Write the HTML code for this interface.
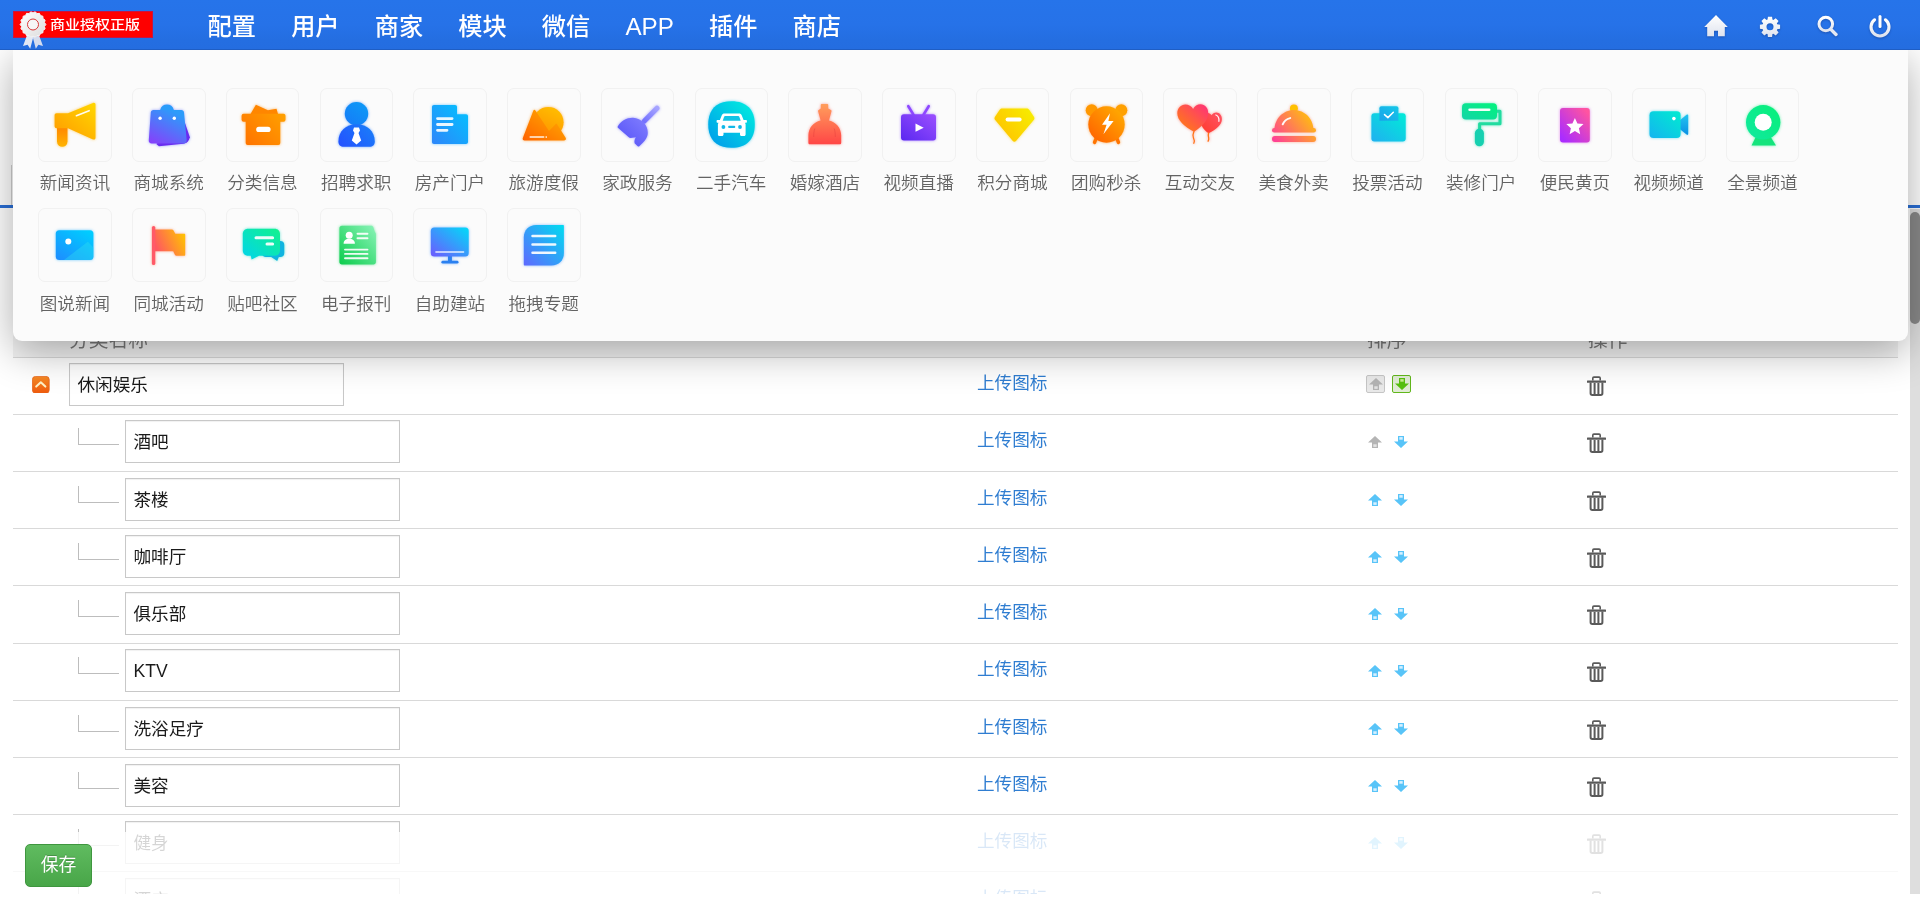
<!DOCTYPE html>
<html lang="zh-CN">
<head>
<meta charset="utf-8">
<title>分类管理</title>
<style>
*{box-sizing:border-box;}
html,body{margin:0;padding:0;}
body{width:1920px;height:908px;overflow:hidden;background:#fff;position:relative;font-family:"Liberation Sans","Noto Sans CJK SC",sans-serif;font-size:17.6px;color:#333;}
a{text-decoration:none;}
#hdr{position:absolute;left:0;top:0;width:1920px;height:50px;background:linear-gradient(#2674ea 0%,#2672e8 50%,#246ee1 82%,#246de0 100%);border-bottom:1px solid #1f5ec4;z-index:30;}
#nav,#badge{will-change:transform;}
#badge span{display:inline-block;transform:scaleY(.84);transform-origin:50% 56%;}
#badge{position:absolute;left:13px;top:11px;width:140px;height:27px;background:#fe0000;border:1px solid #c81440;color:#fff;font-size:15px;line-height:26.4px;padding-left:36px;letter-spacing:0;font-weight:500;white-space:nowrap;}
#ribbon{position:absolute;left:18px;top:9px;z-index:2;}
#nav{position:absolute;left:189.6px;top:0;height:50px;display:flex;}
#nav span{display:block;width:83.57px;text-align:center;color:#fff;font-size:24.2px;line-height:53.5px;white-space:nowrap;font-weight:500;}
.hi{position:absolute;top:10px;width:30px;height:30px;filter:drop-shadow(0 1px 1px rgba(0,0,40,.25));}
#page{position:absolute;left:0;top:50px;width:1920px;height:858px;background:#fff;z-index:1;}
#blueline{position:absolute;left:0;top:155px;width:1920px;height:3px;background:#2a6fd6;}
#tabedge{position:absolute;left:0;top:115px;width:12px;height:40px;border-right:1px solid #d0d0d0;}
#tbl{position:absolute;left:13px;top:0;width:1885px;height:858px;will-change:transform;}
.th{position:absolute;top:276.7px;font-size:19.8px;line-height:26px;color:#7a7a7a;white-space:nowrap;}
.thbg{position:absolute;left:0;top:265px;width:1885px;height:42px;background:#f3f3f3;}
.hl{position:absolute;left:0;width:1885px;height:1px;background:#d9d9d9;}
.inp{position:absolute;height:43px;width:275px;border:1px solid #c8c8c8;background:#fff;font-size:17.6px;line-height:43px;padding-left:7.5px;color:#1a1a1a;white-space:nowrap;box-shadow:inset 0 1px 1px rgba(0,0,0,.06);}
.up{position:absolute;left:964px;line-height:26px;color:#2f7dd1;font-size:17.6px;white-space:nowrap;}
.tree{position:absolute;left:65px;width:41px;height:17px;border-left:1px solid #bdbdbd;border-bottom:1px solid #bdbdbd;}
.ic{position:absolute;}
#panel{position:absolute;left:13px;top:50px;width:1894.500px;height:291px;background:#fbfbfb;border-radius:0 0 9px 9px;box-shadow:0 10px 40px rgba(0,0,0,.33);z-index:20;will-change:transform;}
.it{position:absolute;width:73.300px;height:110px;}
.tile{position:absolute;left:0;top:0;width:73.600px;height:73.600px;border:1px solid #f1f1f1;border-radius:7px;background:#fbfbfb;}
.it svg{position:absolute;left:0;top:0;}
.lb{position:absolute;left:-20px;width:113.300px;top:81px;font-size:17.600px;line-height:28px;color:#636363;white-space:nowrap;text-align:center;font-weight:350;}
#foot{position:absolute;left:0;top:831.500px;width:1910px;height:62.500px;background:rgba(255,255,255,.82);z-index:10;}
#save{position:absolute;left:25px;top:12.700px;width:67px;height:42.800px;border-radius:5px;background:linear-gradient(#60bb60,#48a648);border:1px solid #3f963f;color:#fff;font-size:17.800px;line-height:41.600px;text-align:center;text-shadow:0 -1px 0 rgba(0,0,0,.2);}
#whitebot{position:absolute;left:0;top:894px;width:1920px;height:14px;background:#fff;z-index:11;}
#sb{position:absolute;left:1909.500px;top:159px;width:10.500px;height:685px;background:#dedede;z-index:5;}
#sbt{position:absolute;left:0;top:3px;width:10.500px;height:112px;border-radius:5px;background:#8a8a8a;}
</style>
</head>
<body>
<div id="hdr">
<div id="badge"><span>商业授权正版</span></div>
<svg id="ribbon" width="30" height="42" viewBox="0 0 30 42"><defs><linearGradient id="rg" x1="0" y1="0" x2="1" y2="1"><stop offset="0" stop-color="#fff"/><stop offset="1" stop-color="#dcdcdc"/></linearGradient></defs><path d="M9.300 25.500l-4.300 11.500 4.600-1.300 2.600 4 3.300-12.500z" fill="#e2e8f4"/><path d="M20.700 25.500l4.300 11.500-4.600-1.300-2.600 4-3.300-12.500z" fill="#d4dcee"/><path d="M27.90 15.50 L26.42 17.51 L27.12 19.91 L25.05 21.30 L24.88 23.79 L22.46 24.39 L21.45 26.67 L18.97 26.40 L17.24 28.20 L15.00 27.10 L12.76 28.20 L11.03 26.40 L8.55 26.67 L7.54 24.39 L5.12 23.79 L4.95 21.30 L2.88 19.91 L3.58 17.51 L2.10 15.50 L3.58 13.49 L2.88 11.09 L4.95 9.70 L5.12 7.21 L7.54 6.61 L8.55 4.33 L11.03 4.60 L12.76 2.80 L15.00 3.90 L17.24 2.80 L18.97 4.60 L21.45 4.33 L22.46 6.61 L24.88 7.21 L25.05 9.70 L27.12 11.09 L26.42 13.49Z" fill="url(#rg)" stroke="#f4f4f4" stroke-width="1" stroke-linejoin="round"/><circle cx="15" cy="15.500" r="5.500" fill="#f6f6f6" stroke="#d83838" stroke-width="1"/></svg>
<div id="nav"><span>配置</span><span>用户</span><span>商家</span><span>模块</span><span>微信</span><span>APP</span><span>插件</span><span>商店</span></div>
<svg class="hi" style="left:1700.800px" viewBox="0 0 30 30"><defs><linearGradient id="hg" x1="0" y1="0" x2="0" y2="1"><stop offset="0" stop-color="#fff"/><stop offset="1" stop-color="#dfe3ee"/></linearGradient></defs><path d="M15 5.100L3.200 16.900h3v9.300h6.800v-5.500h4v5.500h6.800v-9.300h3z" fill="url(#hg)"/></svg><svg class="hi" style="left:1755px" viewBox="0 0 30 30"><path fill-rule="evenodd" d="M12.95 6.71 L17.05 6.71 L17.46 9.61 L18.34 9.97 L20.69 8.22 L23.58 11.11 L21.83 13.46 L22.19 14.34 L25.09 14.75 L25.09 18.85 L22.19 19.26 L21.83 20.14 L23.58 22.49 L20.69 25.38 L18.34 23.63 L17.46 23.99 L17.05 26.89 L12.95 26.89 L12.54 23.99 L11.66 23.63 L9.31 25.38 L6.42 22.49 L8.17 20.14 L7.81 19.26 L4.91 18.85 L4.91 14.75 L7.81 14.34 L8.17 13.46 L6.42 11.11 L9.31 8.22 L11.66 9.97 L12.54 9.61Z M18.5 16.8a3.500 3.500 0 1 0-7 0 3.500 3.500 0 1 0 7 0z" fill="url(#hg)"/></svg><svg class="hi" style="left:1810.600px" viewBox="0 0 30 30"><circle cx="14.800" cy="14" r="6.800" stroke="url(#hg)" stroke-width="3" fill="none"/><path d="M20 19.600l5 4.800" stroke="#e4e8f2" stroke-width="3.400" stroke-linecap="round"/></svg><svg class="hi" style="left:1865px" viewBox="0 0 30 30"><path d="M9.600 9.800a9 9 0 1 0 10.800 0" stroke="url(#hg)" stroke-width="3.100" stroke-linecap="round" fill="none"/><path d="M15 6.400v10.200" stroke="#fff" stroke-width="3" stroke-linecap="round"/></svg>
</div>
<div id="page">
<div id="tabedge"></div>
<div id="blueline"></div>
<div id="sb"><div id="sbt"></div></div>
<div id="tbl">
<div class="thbg"></div><div class="th" style="left:56px">分类名称</div><div class="th" style="left:1354px">排序</div><div class="th" style="left:1575px">操作</div>
<div class="hl" style="top:307px"></div>
<div class="hl" style="top:364px"></div>
<div class="hl" style="top:421px"></div>
<div class="hl" style="top:478px"></div>
<div class="hl" style="top:535px"></div>
<div class="hl" style="top:593px"></div>
<div class="hl" style="top:650px"></div>
<div class="hl" style="top:707px"></div>
<div class="hl" style="top:764px"></div>
<div class="hl" style="top:821px"></div>
<div class="hl" style="top:879px"></div>
<svg class="ic" style="left:19px;top:325.60px" width="17.600" height="17.600" viewBox="0 0 17.600 17.600"><defs><linearGradient id="og" x1="0" y1="0" x2="0" y2="1"><stop offset="0" stop-color="#f68a24"/><stop offset="1" stop-color="#ef5a0e"/></linearGradient></defs><rect x=".4" y=".4" width="16.800" height="16.800" rx="3.200" fill="url(#og)" stroke="#e8641a" stroke-width=".8"/><path d="M4.200 10.600l4.600-4.400 4.600 4.400" stroke="#fff2c8" stroke-width="2" fill="none" stroke-linecap="round" stroke-linejoin="round"/></svg>
<div class="inp" style="left:56px;top:313px">休闲娱乐</div>
<a class="up" style="top:320.20px">上传图标</a>
<div class="ic" style="left:1353.200px;top:325px;width:18.500px;height:18.300px;border:1px solid #c6c6c6;border-radius:2px;background:#e9e9e9"></div><svg class="ic" style="left:1355.5px;top:328.1px" width="14" height="12" viewBox="0 0 14 12"><path d="M7 0L14 6.500H10V12H4V6.500H0z" fill="#b4b4b4"/><rect x="5.300" y="8.300" width="3.400" height="2.600" fill="#e4e4e4"/></svg>
<div class="ic" style="left:1379.200px;top:325px;width:18.500px;height:18.300px;border:1.300px solid #62b81c;border-radius:2px;background:#e2ecd6"></div><svg class="ic" style="left:1381.5px;top:328.3px" width="14" height="12" viewBox="0 0 14 12"><path d="M7 12L14 5.500H10V0H4V5.500H0z" fill="#58c010"/><rect x="5.300" y="1.100" width="3.400" height="2.600" fill="#c8f090"/></svg>
<svg class="ic" style="left:1574.2px;top:325.5px" width="19" height="20" viewBox="0 0 19 20"><path d="M5.800 4.600V2.200c0-.7.400-1.100 1.100-1.100h5.200c.7 0 1.100.4 1.100 1.100v2.400" stroke="#5a5a5a" stroke-width="1.600" fill="none"/><path d="M.7 5.700h17.600" stroke="#5a5a5a" stroke-width="2.200" stroke-linecap="round"/><path d="M3.600 6.500v10.700c0 1.100.6 1.700 1.700 1.700h8.400c1.100 0 1.700-.6 1.700-1.700V6.500" stroke="#5a5a5a" stroke-width="2" fill="none"/><path d="M7.600 7v11M11.400 7v11" stroke="#5a5a5a" stroke-width="2"/></svg>
<div class="tree" style="top:378px"></div>
<div class="inp" style="left:112px;top:370px">酒吧</div>
<a class="up" style="top:377.20px">上传图标</a>
<svg class="ic" style="left:1354.9px;top:385.6px" width="14" height="12" viewBox="0 0 14 12"><path d="M7 0L14 6.500H10V12H4V6.500H0z" fill="#b4b4b4"/><rect x="5.300" y="8.300" width="3.400" height="2.600" fill="#e4e4e4"/></svg>
<svg class="ic" style="left:1381px;top:385.6px" width="14" height="12" viewBox="0 0 14 12"><path d="M7 12L14 5.500H10V0H4V5.500H0z" fill="#58c4f8"/><rect x="5.300" y="1.100" width="3.400" height="2.600" fill="#d6f0ff"/></svg>
<svg class="ic" style="left:1574.2px;top:382.5px" width="19" height="20" viewBox="0 0 19 20"><path d="M5.800 4.600V2.200c0-.7.400-1.100 1.100-1.100h5.200c.7 0 1.100.4 1.100 1.100v2.400" stroke="#5a5a5a" stroke-width="1.600" fill="none"/><path d="M.7 5.700h17.600" stroke="#5a5a5a" stroke-width="2.200" stroke-linecap="round"/><path d="M3.600 6.500v10.700c0 1.100.6 1.700 1.700 1.700h8.400c1.100 0 1.700-.6 1.700-1.700V6.500" stroke="#5a5a5a" stroke-width="2" fill="none"/><path d="M7.600 7v11M11.400 7v11" stroke="#5a5a5a" stroke-width="2"/></svg>
<div class="tree" style="top:436px"></div>
<div class="inp" style="left:112px;top:428px">茶楼</div>
<a class="up" style="top:435.20px">上传图标</a>
<svg class="ic" style="left:1354.9px;top:443.6px" width="14" height="12" viewBox="0 0 14 12"><path d="M7 0L14 6.500H10V12H4V6.500H0z" fill="#58c4f8"/><rect x="5.300" y="8.300" width="3.400" height="2.600" fill="#d6f0ff"/></svg>
<svg class="ic" style="left:1381px;top:443.6px" width="14" height="12" viewBox="0 0 14 12"><path d="M7 12L14 5.500H10V0H4V5.500H0z" fill="#58c4f8"/><rect x="5.300" y="1.100" width="3.400" height="2.600" fill="#d6f0ff"/></svg>
<svg class="ic" style="left:1574.2px;top:440.5px" width="19" height="20" viewBox="0 0 19 20"><path d="M5.800 4.600V2.200c0-.7.400-1.100 1.100-1.100h5.200c.7 0 1.100.4 1.100 1.100v2.400" stroke="#5a5a5a" stroke-width="1.600" fill="none"/><path d="M.7 5.700h17.600" stroke="#5a5a5a" stroke-width="2.200" stroke-linecap="round"/><path d="M3.600 6.500v10.700c0 1.100.6 1.700 1.700 1.700h8.400c1.100 0 1.700-.6 1.700-1.700V6.500" stroke="#5a5a5a" stroke-width="2" fill="none"/><path d="M7.600 7v11M11.400 7v11" stroke="#5a5a5a" stroke-width="2"/></svg>
<div class="tree" style="top:493px"></div>
<div class="inp" style="left:112px;top:485px">咖啡厅</div>
<a class="up" style="top:492.20px">上传图标</a>
<svg class="ic" style="left:1354.9px;top:500.6px" width="14" height="12" viewBox="0 0 14 12"><path d="M7 0L14 6.500H10V12H4V6.500H0z" fill="#58c4f8"/><rect x="5.300" y="8.300" width="3.400" height="2.600" fill="#d6f0ff"/></svg>
<svg class="ic" style="left:1381px;top:500.6px" width="14" height="12" viewBox="0 0 14 12"><path d="M7 12L14 5.500H10V0H4V5.500H0z" fill="#58c4f8"/><rect x="5.300" y="1.100" width="3.400" height="2.600" fill="#d6f0ff"/></svg>
<svg class="ic" style="left:1574.2px;top:497.5px" width="19" height="20" viewBox="0 0 19 20"><path d="M5.800 4.600V2.200c0-.7.400-1.100 1.100-1.100h5.200c.7 0 1.100.4 1.100 1.100v2.400" stroke="#5a5a5a" stroke-width="1.600" fill="none"/><path d="M.7 5.700h17.600" stroke="#5a5a5a" stroke-width="2.200" stroke-linecap="round"/><path d="M3.600 6.500v10.700c0 1.100.6 1.700 1.700 1.700h8.400c1.100 0 1.700-.6 1.700-1.700V6.500" stroke="#5a5a5a" stroke-width="2" fill="none"/><path d="M7.600 7v11M11.400 7v11" stroke="#5a5a5a" stroke-width="2"/></svg>
<div class="tree" style="top:550px"></div>
<div class="inp" style="left:112px;top:542px">俱乐部</div>
<a class="up" style="top:549.20px">上传图标</a>
<svg class="ic" style="left:1354.9px;top:557.6px" width="14" height="12" viewBox="0 0 14 12"><path d="M7 0L14 6.500H10V12H4V6.500H0z" fill="#58c4f8"/><rect x="5.300" y="8.300" width="3.400" height="2.600" fill="#d6f0ff"/></svg>
<svg class="ic" style="left:1381px;top:557.6px" width="14" height="12" viewBox="0 0 14 12"><path d="M7 12L14 5.500H10V0H4V5.500H0z" fill="#58c4f8"/><rect x="5.300" y="1.100" width="3.400" height="2.600" fill="#d6f0ff"/></svg>
<svg class="ic" style="left:1574.2px;top:554.5px" width="19" height="20" viewBox="0 0 19 20"><path d="M5.800 4.600V2.200c0-.7.400-1.100 1.100-1.100h5.200c.7 0 1.100.4 1.100 1.100v2.400" stroke="#5a5a5a" stroke-width="1.600" fill="none"/><path d="M.7 5.700h17.600" stroke="#5a5a5a" stroke-width="2.200" stroke-linecap="round"/><path d="M3.600 6.500v10.700c0 1.100.6 1.700 1.700 1.700h8.400c1.100 0 1.700-.6 1.700-1.700V6.500" stroke="#5a5a5a" stroke-width="2" fill="none"/><path d="M7.600 7v11M11.400 7v11" stroke="#5a5a5a" stroke-width="2"/></svg>
<div class="tree" style="top:607px"></div>
<div class="inp" style="left:112px;top:599px">KTV</div>
<a class="up" style="top:606.20px">上传图标</a>
<svg class="ic" style="left:1354.9px;top:614.6px" width="14" height="12" viewBox="0 0 14 12"><path d="M7 0L14 6.500H10V12H4V6.500H0z" fill="#58c4f8"/><rect x="5.300" y="8.300" width="3.400" height="2.600" fill="#d6f0ff"/></svg>
<svg class="ic" style="left:1381px;top:614.6px" width="14" height="12" viewBox="0 0 14 12"><path d="M7 12L14 5.500H10V0H4V5.500H0z" fill="#58c4f8"/><rect x="5.300" y="1.100" width="3.400" height="2.600" fill="#d6f0ff"/></svg>
<svg class="ic" style="left:1574.2px;top:611.5px" width="19" height="20" viewBox="0 0 19 20"><path d="M5.800 4.600V2.200c0-.7.400-1.100 1.100-1.100h5.200c.7 0 1.100.4 1.100 1.100v2.400" stroke="#5a5a5a" stroke-width="1.600" fill="none"/><path d="M.7 5.700h17.600" stroke="#5a5a5a" stroke-width="2.200" stroke-linecap="round"/><path d="M3.600 6.500v10.700c0 1.100.6 1.700 1.700 1.700h8.400c1.100 0 1.700-.6 1.700-1.700V6.500" stroke="#5a5a5a" stroke-width="2" fill="none"/><path d="M7.600 7v11M11.400 7v11" stroke="#5a5a5a" stroke-width="2"/></svg>
<div class="tree" style="top:665px"></div>
<div class="inp" style="left:112px;top:657px">洗浴足疗</div>
<a class="up" style="top:664.20px">上传图标</a>
<svg class="ic" style="left:1354.9px;top:672.6px" width="14" height="12" viewBox="0 0 14 12"><path d="M7 0L14 6.500H10V12H4V6.500H0z" fill="#58c4f8"/><rect x="5.300" y="8.300" width="3.400" height="2.600" fill="#d6f0ff"/></svg>
<svg class="ic" style="left:1381px;top:672.6px" width="14" height="12" viewBox="0 0 14 12"><path d="M7 12L14 5.500H10V0H4V5.500H0z" fill="#58c4f8"/><rect x="5.300" y="1.100" width="3.400" height="2.600" fill="#d6f0ff"/></svg>
<svg class="ic" style="left:1574.2px;top:669.5px" width="19" height="20" viewBox="0 0 19 20"><path d="M5.800 4.600V2.200c0-.7.400-1.100 1.100-1.100h5.200c.7 0 1.100.4 1.100 1.100v2.400" stroke="#5a5a5a" stroke-width="1.600" fill="none"/><path d="M.7 5.700h17.600" stroke="#5a5a5a" stroke-width="2.200" stroke-linecap="round"/><path d="M3.600 6.500v10.700c0 1.100.6 1.700 1.700 1.700h8.400c1.100 0 1.700-.6 1.700-1.700V6.500" stroke="#5a5a5a" stroke-width="2" fill="none"/><path d="M7.600 7v11M11.400 7v11" stroke="#5a5a5a" stroke-width="2"/></svg>
<div class="tree" style="top:722px"></div>
<div class="inp" style="left:112px;top:714px">美容</div>
<a class="up" style="top:721.20px">上传图标</a>
<svg class="ic" style="left:1354.9px;top:729.6px" width="14" height="12" viewBox="0 0 14 12"><path d="M7 0L14 6.500H10V12H4V6.500H0z" fill="#58c4f8"/><rect x="5.300" y="8.300" width="3.400" height="2.600" fill="#d6f0ff"/></svg>
<svg class="ic" style="left:1381px;top:729.6px" width="14" height="12" viewBox="0 0 14 12"><path d="M7 12L14 5.500H10V0H4V5.500H0z" fill="#58c4f8"/><rect x="5.300" y="1.100" width="3.400" height="2.600" fill="#d6f0ff"/></svg>
<svg class="ic" style="left:1574.2px;top:726.5px" width="19" height="20" viewBox="0 0 19 20"><path d="M5.800 4.600V2.200c0-.7.400-1.100 1.100-1.100h5.200c.7 0 1.100.4 1.100 1.100v2.400" stroke="#5a5a5a" stroke-width="1.600" fill="none"/><path d="M.7 5.700h17.600" stroke="#5a5a5a" stroke-width="2.200" stroke-linecap="round"/><path d="M3.600 6.500v10.700c0 1.100.6 1.700 1.700 1.700h8.400c1.100 0 1.700-.6 1.700-1.700V6.500" stroke="#5a5a5a" stroke-width="2" fill="none"/><path d="M7.600 7v11M11.400 7v11" stroke="#5a5a5a" stroke-width="2"/></svg>
<div class="tree" style="top:779px"></div>
<div class="inp" style="left:112px;top:771px">健身</div>
<a class="up" style="top:778.20px">上传图标</a>
<svg class="ic" style="left:1354.9px;top:786.6px" width="14" height="12" viewBox="0 0 14 12"><path d="M7 0L14 6.500H10V12H4V6.500H0z" fill="#58c4f8"/><rect x="5.300" y="8.300" width="3.400" height="2.600" fill="#d6f0ff"/></svg>
<svg class="ic" style="left:1381px;top:786.6px" width="14" height="12" viewBox="0 0 14 12"><path d="M7 12L14 5.500H10V0H4V5.500H0z" fill="#58c4f8"/><rect x="5.300" y="1.100" width="3.400" height="2.600" fill="#d6f0ff"/></svg>
<svg class="ic" style="left:1574.2px;top:783.5px" width="19" height="20" viewBox="0 0 19 20"><path d="M5.800 4.600V2.200c0-.7.400-1.100 1.100-1.100h5.200c.7 0 1.100.4 1.100 1.100v2.400" stroke="#5a5a5a" stroke-width="1.600" fill="none"/><path d="M.7 5.700h17.600" stroke="#5a5a5a" stroke-width="2.200" stroke-linecap="round"/><path d="M3.600 6.500v10.700c0 1.100.6 1.700 1.700 1.700h8.400c1.100 0 1.700-.6 1.700-1.700V6.500" stroke="#5a5a5a" stroke-width="2" fill="none"/><path d="M7.600 7v11M11.400 7v11" stroke="#5a5a5a" stroke-width="2"/></svg>
<div class="tree" style="top:836px"></div>
<div class="inp" style="left:112px;top:828px">酒店</div>
<a class="up" style="top:835.20px">上传图标</a>
<svg class="ic" style="left:1354.9px;top:843.6px" width="14" height="12" viewBox="0 0 14 12"><path d="M7 0L14 6.500H10V12H4V6.500H0z" fill="#58c4f8"/><rect x="5.300" y="8.300" width="3.400" height="2.600" fill="#d6f0ff"/></svg>
<svg class="ic" style="left:1381px;top:843.6px" width="14" height="12" viewBox="0 0 14 12"><path d="M7 12L14 5.500H10V0H4V5.500H0z" fill="#58c4f8"/><rect x="5.300" y="1.100" width="3.400" height="2.600" fill="#d6f0ff"/></svg>
<svg class="ic" style="left:1574.2px;top:840.5px" width="19" height="20" viewBox="0 0 19 20"><path d="M5.800 4.600V2.200c0-.7.400-1.100 1.100-1.100h5.200c.7 0 1.100.4 1.100 1.100v2.400" stroke="#5a5a5a" stroke-width="1.600" fill="none"/><path d="M.7 5.700h17.600" stroke="#5a5a5a" stroke-width="2.200" stroke-linecap="round"/><path d="M3.600 6.500v10.700c0 1.100.6 1.700 1.700 1.700h8.400c1.100 0 1.700-.6 1.700-1.700V6.500" stroke="#5a5a5a" stroke-width="2" fill="none"/><path d="M7.600 7v11M11.400 7v11" stroke="#5a5a5a" stroke-width="2"/></svg>
<div class="ic" style="left:65px;top:795px;width:1px;height:50px;background:#bdbdbd"></div>
</div>
</div>
<div id="panel">
<div class="it" style="left:25.30px;top:38px"><div class="tile"></div><svg width="74" height="74" viewBox="0 0 74 74" style="filter:drop-shadow(0 0 1.600px #ffb00099)"><defs></defs><linearGradient id="g1" x1="0" y1="1" x2="1" y2="0"><stop offset="0" stop-color="#ff9800"/><stop offset="1" stop-color="#ffd800"/></linearGradient><linearGradient id="g1b" x1="0" y1="1" x2="0" y2="0"><stop offset="0" stop-color="#ffb400"/><stop offset="1" stop-color="#ff8800"/></linearGradient><path d="M19 40h10.5v13.5a5.2 5.2 0 0 1-10.5 0z" fill="url(#g1b)"/><path d="M17.6 25.2h12.4L55 14.9c1.5-.6 2.5.2 2.5 1.6v33.2c0 1.5-1.1 2.300-2.5 1.700L30 40.200H18.600c-1.200 0-2-.8-2-2V27.200c0-1.200.8-2 2-2z" fill="url(#g1)"/><path d="M38.4 27.7l12.700-5" stroke="#fff" stroke-width="1.700" stroke-linecap="round" fill="none" opacity=".95"/></svg><div class="lb">新闻资讯</div></div>
<div class="it" style="left:119.05px;top:38px"><div class="tile"></div><svg width="74" height="74" viewBox="0 0 74 74" style="filter:drop-shadow(0 0 1.600px #5a6cff99)"><defs></defs><linearGradient id="g2" x1="0" y1="1" x2="0.6" y2="0"><stop offset="0" stop-color="#8a3cfa"/><stop offset="1" stop-color="#2c9cfa"/></linearGradient><path d="M24.300 56l2.600 2.200 24.500-2.500c2.500-.3 4.500-1.600 5.600-3.900l.9-2.600L53 35z" fill="#6a2cf0"/><path d="M26.500 23.500c1.500-.3 1.500-1 1.800-2a7 7 0 0 1 13.400 0c.3 1 .3 1.700 1.800 2z" fill="#2a9cfa"/><path d="M21.500 21.900h27.800c1.600 0 2.600 1 2.700 2.500l2.700 27.500c.2 2-1.100 3.500-3 3.500H19.800c-2 0-3.300-1.500-3-3.500l2-27.500c.1-1.500 1.100-2.500 2.700-2.500z" fill="url(#g2)"/><circle cx="28.100" cy="30.200" r="1.700" fill="#fff"/><circle cx="42.300" cy="30.200" r="1.700" fill="#fff"/></svg><div class="lb">商城系统</div></div>
<div class="it" style="left:212.80px;top:38px"><div class="tile"></div><svg width="74" height="74" viewBox="0 0 74 74" style="filter:drop-shadow(0 0 1.600px #ff8a0099)"><defs></defs><linearGradient id="g3" gradientUnits="userSpaceOnUse" x1="18" y1="57" x2="58" y2="20"><stop offset="0" stop-color="#ff7200"/><stop offset="1" stop-color="#ffa400"/></linearGradient><path d="M24.500 26l5.400-9.200 12 5.400 8.600-1.500 1.500 5.300z" fill="#ff8600"/><rect x="15.600" y="25.800" width="43.900" height="8" rx="2" fill="url(#g3)"/><path d="M19.700 33h34.600v21.900a2 2 0 0 1-2 2H21.700a2 2 0 0 1-2-2z" fill="url(#g3)"/><rect x="30.200" y="38.700" width="14.400" height="5.300" rx="2.600" fill="#fff"/></svg><div class="lb">分类信息</div></div>
<div class="it" style="left:306.55px;top:38px"><div class="tile"></div><svg width="74" height="74" viewBox="0 0 74 74" style="filter:drop-shadow(0 0 1.600px #1c78ff99)"><defs></defs><linearGradient id="g4" gradientUnits="userSpaceOnUse" x1="20" y1="60" x2="52" y2="30"><stop offset="0" stop-color="#2450ff"/><stop offset="1" stop-color="#1884f8"/></linearGradient><linearGradient id="g4h" gradientUnits="userSpaceOnUse" x1="28" y1="37" x2="45" y2="14"><stop offset="0" stop-color="#167cf8"/><stop offset="1" stop-color="#0c9af6"/></linearGradient><circle cx="36.500" cy="25.800" r="11.700" fill="url(#g4h)"/><path d="M36.500 36.300c10.600 0 18.300 7.200 18.300 17.200 0 3.400-2.200 5.300-5.300 5.300H23.700c-3.100 0-5.300-1.900-5.300-5.300 0-10 7.500-17.200 18.100-17.200z" fill="url(#g4)"/><path d="M34 39.600h5l1 3-1.500 2.500 2.700 7.500-4.700 3.800-4.700-3.800 2.700-7.500-1.500-2.500z" fill="#fff"/></svg><div class="lb">招聘求职</div></div>
<div class="it" style="left:400.30px;top:38px"><div class="tile"></div><svg width="74" height="74" viewBox="0 0 74 74" style="filter:drop-shadow(0 0 1.600px #18a8ff99)"><defs></defs><linearGradient id="g5" x1="0" y1="1" x2="1" y2="0"><stop offset="0" stop-color="#2e86fa"/><stop offset="1" stop-color="#00c4ff"/></linearGradient><path d="M21 17h21c1.300 0 2 .8 2 2v7.200h9c1.300 0 2 .8 2 2v25.700c0 1.300-.8 2-2 2H21c-1.300 0-2-.8-2-2V19c0-1.300.8-2 2-2z" fill="url(#g5)"/><path d="M24.500 30.600h14.600M24.500 36.500h14.600M24.500 42.300h9.500" stroke="#fff" stroke-width="2.800" stroke-linecap="round" fill="none" opacity=".9"/></svg><div class="lb">房产门户</div></div>
<div class="it" style="left:494.05px;top:38px"><div class="tile"></div><svg width="74" height="74" viewBox="0 0 74 74" style="filter:drop-shadow(0 0 1.600px #ff8a0099)"><defs></defs><linearGradient id="g6" x1="0" y1="1" x2="1" y2="0"><stop offset="0" stop-color="#ff6200"/><stop offset="1" stop-color="#ffb400"/></linearGradient><linearGradient id="g6b" x1="0" y1="1" x2="0.5" y2="0"><stop offset="0" stop-color="#ff8a00"/><stop offset="1" stop-color="#ffba00"/></linearGradient><circle cx="41.300" cy="34.300" r="15.300" fill="url(#g6b)"/><path d="M15.900 49.800L26.400 22.600c.4-1 1.500-1 2 0L42 43l6.500-6.800c.5-.6 1.200-.6 1.600 0l8.500 13.500c.8 1.400 0 2.800-1.500 2.800H17.500c-1.500 0-2.200-1.300-1.600-2.700z" fill="url(#g6)"/><path d="M23.200 49.100h13.500" stroke="#fff" stroke-width="1.500" stroke-linecap="round" opacity=".9"/><circle cx="39.200" cy="49.100" r=".8" fill="#fff"/></svg><div class="lb">旅游度假</div></div>
<div class="it" style="left:587.80px;top:38px"><div class="tile"></div><svg width="74" height="74" viewBox="0 0 74 74" style="filter:drop-shadow(0 0 1.600px #6a66ff99)"><defs></defs><linearGradient id="g7" x1="0" y1="1" x2="1" y2="0"><stop offset="0" stop-color="#524ef6"/><stop offset="1" stop-color="#8280ff"/></linearGradient><linearGradient id="g7b" x1="0" y1="1" x2="1" y2="0"><stop offset="0" stop-color="#7472ff"/><stop offset="1" stop-color="#a6a4ff"/></linearGradient><path d="M43.400 33L56 20.200" stroke="url(#g7b)" stroke-width="5" stroke-linecap="round" fill="none"/><path d="M16.700 38.600C20 32.500 26 29.500 32 29.700c8.500.5 15 7.300 14.800 15.300-.1 5.500-4.300 9.500-8.500 13.200-.5.500-1.100.5-1.600 0l-3.100-3c-.6-2.700.4-4.700 1.400-5.900l-5.500.7c-.7 0-1.200-.2-1.700-.7L16.900 39.800c-.4-.4-.5-.8-.2-1.200z" fill="url(#g7)"/></svg><div class="lb">家政服务</div></div>
<div class="it" style="left:681.55px;top:38px"><div class="tile"></div><svg width="74" height="74" viewBox="0 0 74 74" style="filter:drop-shadow(0 0 1.600px #00b8e899)"><defs></defs><linearGradient id="g8" x1="0.1" y1="0.9" x2="0.9" y2="0.1"><stop offset="0" stop-color="#00a0ea"/><stop offset="1" stop-color="#00e8e0"/></linearGradient><path d="M36.500 13.200c15 0 23.300 8.300 23.300 23.300S51.500 59.800 36.500 59.800 13.200 51.500 13.200 36.500 21.500 13.200 36.500 13.200z" fill="url(#g8)"/><path d="M29.500 25.500h14.500c1.300 0 2.200.6 2.700 1.800l1.900 4.700h2.300c.6 0 1 .4 1 1v.8c0 .6-.4 1-1 1h-.9l.6 1.500v10.200c0 .9-.6 1.500-1.500 1.500h-2.600c-.9 0-1.500-.6-1.500-1.500v-1.800H28.500v1.800c0 .9-.6 1.500-1.500 1.500h-2.600c-.9 0-1.500-.6-1.500-1.500V36.300l.6-1.500h-.9c-.6 0-1-.4-1-1V33c0-.6.400-1 1-1h2.300l1.900-4.700c.5-1.200 1.400-1.800 2.700-1.800z" fill="#fff"/><path d="M30.200 28h13c.5 0 .9.300 1.100.8l1.400 4H27.700l1.400-4c.2-.5.600-.8 1.100-.8z" fill="#12c4e6"/><circle cx="28.400" cy="39" r="1.900" fill="#10b8e8"/><circle cx="45" cy="39" r="1.900" fill="#10b8e8"/><rect x="33.200" y="37.800" width="7" height="2.200" rx=".8" fill="#10b8e8"/></svg><div class="lb">二手汽车</div></div>
<div class="it" style="left:775.30px;top:38px"><div class="tile"></div><svg width="74" height="74" viewBox="0 0 74 74" style="filter:drop-shadow(0 0 1.600px #ff5a5099)"><defs></defs><linearGradient id="g9" x1="0" y1="1" x2="0" y2="0"><stop offset="0" stop-color="#ff4646"/><stop offset="1" stop-color="#ff9e5c"/></linearGradient><path d="M33.600 16h5.800c.5 0 .8.300.8.800v3.800l2.700 1.300c.6.300.8.800.6 1.400l-2.500 9.100c7 1.600 12.200 7.400 12.200 14.900v7.400c0 1-.6 1.600-1.600 1.600H22c-1 0-1.600-.6-1.600-1.600v-7.400c0-7.500 5.200-13.300 12.200-14.900l-2.500-9.100c-.2-.6 0-1.100.6-1.400l2.100-1.300v-3.800c0-.5.300-.8.800-.8z" fill="url(#g9)"/><path d="M26.800 40.500c-.9 2.800-1.100 5.500-1.100 8.500M46.200 40.500c.9 2.800 1.100 5.500 1.100 8.500" stroke="#e23c3c" stroke-width=".8" fill="none" opacity=".55"/></svg><div class="lb">婚嫁酒店</div></div>
<div class="it" style="left:869.05px;top:38px"><div class="tile"></div><svg width="74" height="74" viewBox="0 0 74 74" style="filter:drop-shadow(0 0 1.600px #7a3cff99)"><defs></defs><linearGradient id="g10" x1="0" y1="1" x2="1" y2="0"><stop offset="0" stop-color="#5a28f0"/><stop offset="1" stop-color="#9c50ff"/></linearGradient><path d="M26.300 18.200l5.200 8.500M46.700 18.200l-5.200 8.500" stroke="#8e48ff" stroke-width="2.600" stroke-linecap="round"/><rect x="19" y="26.200" width="35" height="26.300" rx="3" fill="url(#g10)"/><path d="M33.500 35.600v8.200l8.200-4.100z" fill="#fff"/></svg><div class="lb">视频直播</div></div>
<div class="it" style="left:962.80px;top:38px"><div class="tile"></div><svg width="74" height="74" viewBox="0 0 74 74" style="filter:drop-shadow(0 0 1.600px #ffd00099)"><defs></defs><linearGradient id="g11" x1="0" y1="0.6" x2="1" y2="0"><stop offset="0" stop-color="#ffc400"/><stop offset="1" stop-color="#f6f000"/></linearGradient><path d="M26.300 20.400h24.200c1.200 0 2 .4 2.700 1.400l4.700 6.900c.8 1.200.7 2.300-.2 3.400L40.200 52.800c-1 1.200-2.600 1.200-3.600 0L19.200 32.100c-.9-1.100-1-2.200-.2-3.400l4.700-6.900c.7-1 1.500-1.400 2.600-1.400z" fill="url(#g11)"/><rect x="29.600" y="29.600" width="16" height="4" rx="2" fill="#fff"/></svg><div class="lb">积分商城</div></div>
<div class="it" style="left:1056.55px;top:38px"><div class="tile"></div><svg width="74" height="74" viewBox="0 0 74 74" style="filter:drop-shadow(0 0 1.600px #ff800099)"><defs></defs><linearGradient id="g12" x1="0.1" y1="0.9" x2="0.9" y2="0.1"><stop offset="0" stop-color="#ff6400"/><stop offset="1" stop-color="#ffaa00"/></linearGradient><circle cx="21.700" cy="22.200" r="6" fill="#ff9800"/><circle cx="51.300" cy="22.200" r="6" fill="#ffa000"/><path d="M26.500 49.500l-2 5M46.500 49.500l2 5" stroke="#ff7400" stroke-width="3.400" stroke-linecap="round"/><circle cx="36.500" cy="36.500" r="18.200" fill="url(#g12)"/><path d="M40 25.200l-8 11.600h4.600l-3.200 9.400 10.200-13.200h-5.200z" fill="#fff"/></svg><div class="lb">团购秒杀</div></div>
<div class="it" style="left:1150.30px;top:38px"><div class="tile"></div><svg width="74" height="74" viewBox="0 0 74 74" style="filter:drop-shadow(0 0 1.600px #ff504099)"><defs></defs><linearGradient id="g13" x1="0.1" y1="0.9" x2="0.9" y2="0.1"><stop offset="0" stop-color="#ff7c14"/><stop offset="1" stop-color="#ff3870"/></linearGradient><linearGradient id="g13b" x1="0" y1="1" x2="1" y2="0"><stop offset="0" stop-color="#ff3a2a"/><stop offset="1" stop-color="#ff5468"/></linearGradient><path d="M45.600 45.200c-5-3.500-8-8-8-12.800 0-4.500 3-7.600 6.300-7.600 2 0 3.600.9 4.600 2.500 1-1.600 2.800-2.900 5-2.900 3 0 5.400 2.800 5.400 6.800 0 5.500-5.500 10-13.300 14z" fill="url(#g13b)"/><path d="M52.900 27c2.200.7 3.300 3.200 3 6.300" stroke="#fff" stroke-width="1.300" stroke-linecap="round" fill="none" opacity=".9"/><path d="M31 43.800c-9.500-5-16.700-11.500-16.700-18.500 0-5.300 3.700-8.800 8-8.800 3.400 0 6.200 1.800 7.800 4.400 1.500-2.800 4.200-4.600 7.500-4.600 4.300 0 7.600 3.700 7.600 8.400 0 7.500-5.700 13.600-14.200 19.100z" fill="url(#g13)"/><path d="M31 43.500c-1 2.500-1.800 4 -.6 6.200 1 1.900 1.300 3.500.4 5.500M45.600 45c-.8 2.200-.2 3.500.1 5 .2 1.200 0 2.200-.6 3.200" stroke="#ff7418" stroke-width="1.300" stroke-linecap="round" fill="none"/></svg><div class="lb">互动交友</div></div>
<div class="it" style="left:1244.05px;top:38px"><div class="tile"></div><svg width="74" height="74" viewBox="0 0 74 74" style="filter:drop-shadow(0 0 1.600px #ff7a5099)"><defs></defs><linearGradient id="g14" gradientUnits="userSpaceOnUse" x1="16" y1="54" x2="56" y2="22"><stop offset="0" stop-color="#ff3a9c"/><stop offset="1" stop-color="#ffcc00"/></linearGradient><circle cx="36.900" cy="20.600" r="4" fill="#ffc000"/><path d="M17.400 42c0-11 8.700-19.900 19.500-19.900S56.400 31 56.400 42z" fill="url(#g14)"/><rect x="15" y="40" width="44" height="4.600" rx="2.300" fill="url(#g14)"/><rect x="15" y="48.100" width="44" height="5.900" rx="2.900" fill="url(#g14)"/><path d="M25.700 36.300c1.200-3 4-5.300 7.500-6.200" stroke="#fff" stroke-width="2" stroke-linecap="round" fill="none" opacity=".95"/></svg><div class="lb">美食外卖</div></div>
<div class="it" style="left:1337.80px;top:38px"><div class="tile"></div><svg width="74" height="74" viewBox="0 0 74 74" style="filter:drop-shadow(0 0 1.600px #10c8e899)"><defs></defs><linearGradient id="g15" x1="0" y1="1" x2="1" y2="0"><stop offset="0" stop-color="#20b0f0"/><stop offset="1" stop-color="#00ecd8"/></linearGradient><linearGradient id="g15b" x1="0" y1="1" x2="1" y2="0"><stop offset="0" stop-color="#1aa2ea"/><stop offset="1" stop-color="#14c8e8"/></linearGradient><rect x="20.400" y="25.200" width="34.300" height="28.300" rx="3" fill="url(#g15)"/><path d="M30.400 18.200h15c1.200 0 2 .8 2 2v12.600H28.400V20.200c0-1.200.8-2 2-2z" fill="url(#g15b)"/><path d="M33.500 26.600l3.400 3 5.400-5.300" stroke="#fff" stroke-width="1.500" stroke-linecap="round" stroke-linejoin="round" fill="none"/></svg><div class="lb">投票活动</div></div>
<div class="it" style="left:1431.55px;top:38px"><div class="tile"></div><svg width="74" height="74" viewBox="0 0 74 74" style="filter:drop-shadow(0 0 1.600px #10d8a099)"><defs></defs><linearGradient id="g16" x1="0" y1="1" x2="1" y2="0"><stop offset="0" stop-color="#14d4a8"/><stop offset="1" stop-color="#00f47c"/></linearGradient><path d="M52 23.300h3v12.400H34.600v6" stroke="#22dca0" stroke-width="3" stroke-linejoin="round" fill="none"/><rect x="17" y="15.300" width="35" height="16.100" rx="4" fill="url(#g16)"/><rect x="23.300" y="20.400" width="22.200" height="2.600" rx="1.300" fill="#fff" opacity=".95"/><rect x="29.900" y="40.800" width="9" height="17.500" rx="4.500" fill="#16d0b0"/></svg><div class="lb">装修门户</div></div>
<div class="it" style="left:1525.30px;top:38px"><div class="tile"></div><svg width="74" height="74" viewBox="0 0 74 74" style="filter:drop-shadow(0 0 1.600px #d040e099)"><defs></defs><linearGradient id="g17" x1="0.1" y1="0.9" x2="0.9" y2="0.1"><stop offset="0" stop-color="#aa2cff"/><stop offset="1" stop-color="#ff54a0"/></linearGradient><rect x="22" y="20" width="29.800" height="34.400" rx="3" fill="url(#g17)"/><path d="M36.900 29.900l2.500 5.600 6.100.6-4.600 4.100 1.300 6-5.300-3.100-5.300 3.100 1.300-6-4.600-4.100 6.100-.6z" fill="#fff"/></svg><div class="lb">便民黄页</div></div>
<div class="it" style="left:1619.05px;top:38px"><div class="tile"></div><svg width="74" height="74" viewBox="0 0 74 74" style="filter:drop-shadow(0 0 1.600px #10c8e899)"><defs></defs><linearGradient id="g18" x1="0" y1="1" x2="1" y2="0"><stop offset="0" stop-color="#14b4f0"/><stop offset="1" stop-color="#00ecd0"/></linearGradient><linearGradient id="g18b" x1="0" y1="1" x2="0" y2="0"><stop offset="0" stop-color="#0a90e4"/><stop offset="1" stop-color="#22c4f0"/></linearGradient><path d="M47 33l7.600-6.200c.8-.6 1.600-.2 1.600.8v18.200c0 1-.8 1.400-1.600.8L47 40.600z" fill="url(#g18b)"/><rect x="17.500" y="23.300" width="31.100" height="26.700" rx="4" fill="url(#g18)"/><circle cx="41.900" cy="30.600" r="1.800" fill="#fff"/></svg><div class="lb">视频频道</div></div>
<div class="it" style="left:1712.80px;top:38px"><div class="tile"></div><svg width="74" height="74" viewBox="0 0 74 74" style="filter:drop-shadow(0 0 1.600px #10f08099)"><defs></defs><linearGradient id="g19" x1="0" y1="1" x2="1" y2="0"><stop offset="0" stop-color="#10e8a0"/><stop offset="1" stop-color="#08f078"/></linearGradient><path d="M30 48.500h14.400l5.600 9.100H25.500z" fill="#14e47c"/><circle cx="37.200" cy="34.300" r="17.200" fill="url(#g19)"/><circle cx="37.200" cy="34.300" r="8.500" fill="#fff"/></svg><div class="lb">全景频道</div></div>
<div class="it" style="left:25.30px;top:158px"><div class="tile"></div><svg width="74" height="74" viewBox="0 0 74 74" style="filter:drop-shadow(0 0 1.600px #10a8ff99)"><defs></defs><linearGradient id="g20" x1="0" y1="1" x2="0.8" y2="0"><stop offset="0" stop-color="#1e8cff"/><stop offset="1" stop-color="#00ccff"/></linearGradient><rect x="17.800" y="22.200" width="37.600" height="29.800" rx="3.500" fill="url(#g20)"/><path d="M26 52l22.800-17.600c.6-.5 1.300-.4 1.800.1l4.800 5V48.500c0 2-1.500 3.500-3.500 3.500z" fill="#30e0f0" opacity=".38"/><circle cx="30.300" cy="33.500" r="3" fill="#fff"/></svg><div class="lb" style="top:81.5px">图说新闻</div></div>
<div class="it" style="left:119.05px;top:158px"><div class="tile"></div><svg width="74" height="74" viewBox="0 0 74 74" style="filter:drop-shadow(0 0 1.600px #ff7a5099)"><defs></defs><linearGradient id="g21" x1="0" y1="0.6" x2="1" y2="0.2"><stop offset="0" stop-color="#ff5860"/><stop offset="1" stop-color="#ffc400"/></linearGradient><path d="M23 21.400h16.800c.8 0 1.300.3 1.700 1l1.800 3.400h8.900c.7 0 1 .4 1 1v19.900c0 .7-.3 1-1 1h-7.800c-.7 0-1.200-.3-1.500-.9l-1.700-3.500H23z" fill="url(#g21)"/><path d="M21.600 19.600v35.800" stroke="#ff5a68" stroke-width="3.400" stroke-linecap="round"/></svg><div class="lb" style="top:81.5px">同城活动</div></div>
<div class="it" style="left:212.80px;top:158px"><div class="tile"></div><svg width="74" height="74" viewBox="0 0 74 74" style="filter:drop-shadow(0 0 1.600px #10d8c099)"><defs></defs><linearGradient id="g22" x1="0" y1="1" x2="1" y2="0"><stop offset="0" stop-color="#00d4ec"/><stop offset="1" stop-color="#12f28c"/></linearGradient><path d="M40 33.100h14.300c2.500 0 4 1.500 4 4V45c0 2.500-1.500 4.100-4 4.100h-1.500l-1.600 3.900-6-3.900H40c-2.500 0-4-1.600-4-4.100v-7.900c0-2.500 1.500-4 4-4z" fill="#10b4e0"/><path d="M22.300 20.700h26.200c3.400 0 5.500 2.100 5.500 5.500v16c0 3.400-2.100 5.500-5.500 5.500H33l-7.400 3.900-.8-3.900h-2.500c-3.400 0-5.500-2.100-5.500-5.500v-16c0-3.400 2.100-5.500 5.500-5.500z" fill="url(#g22)"/><path d="M30 29.800h16.600M41 36h5.600" stroke="#fff" stroke-width="3" stroke-linecap="round" opacity=".92"/></svg><div class="lb" style="top:81.5px">贴吧社区</div></div>
<div class="it" style="left:306.55px;top:158px"><div class="tile"></div><svg width="74" height="74" viewBox="0 0 74 74" style="filter:drop-shadow(0 0 1.600px #20d86899)"><defs></defs><linearGradient id="g23" x1="0" y1="1" x2="1" y2="0"><stop offset="0" stop-color="#0ccc4c"/><stop offset="1" stop-color="#8af4b8"/></linearGradient><path d="M22 17.800h29c1.300 0 2 .5 2.400 1.600l.3 1.200 1.200 3.500c.7.500 1 1.200 1 2.200v27.600c0 1.600-1 2.500-2.500 2.500H22c-1.600 0-2.600-1-2.600-2.500V20.300c0-1.600 1-2.500 2.600-2.500z" fill="url(#g23)"/><circle cx="29.200" cy="27.200" r="3.500" fill="#fff"/><path d="M23.600 35.800c0-3.300 2.400-5 5.600-5s5.700 1.700 5.700 5z" fill="#fff"/><path d="M37.500 25.800h10M37.500 30.200h10M25 41.600h22.500M25 45.900h22.500M25 50.300h22.500" stroke="#fff" stroke-width="1.900" stroke-linecap="round" opacity=".92"/></svg><div class="lb" style="top:81.5px">电子报刊</div></div>
<div class="it" style="left:400.30px;top:158px"><div class="tile"></div><svg width="74" height="74" viewBox="0 0 74 74" style="filter:drop-shadow(0 0 1.600px #3a90ff99)"><defs></defs><linearGradient id="g24" x1="0" y1="1" x2="1" y2="0"><stop offset="0" stop-color="#6e58ff"/><stop offset="1" stop-color="#00dcf8"/></linearGradient><rect x="35" y="47" width="3.900" height="7" fill="#2a80f0"/><rect x="28.400" y="52.800" width="17.100" height="2.800" rx="1.400" fill="#2a80f0"/><rect x="17.800" y="19.500" width="37.900" height="28.900" rx="3.500" fill="url(#g24)"/><path d="M22.900 44h27.700" stroke="#fff" stroke-width="1.400" stroke-linecap="round" opacity=".85"/></svg><div class="lb" style="top:81.5px">自助建站</div></div>
<div class="it" style="left:494.05px;top:158px"><div class="tile"></div><svg width="74" height="74" viewBox="0 0 74 74" style="filter:drop-shadow(0 0 1.600px #3a90ff99)"><defs></defs><linearGradient id="g25" x1="0" y1="1" x2="1" y2="0"><stop offset="0" stop-color="#5e68ff"/><stop offset="1" stop-color="#00dcf0"/></linearGradient><path d="M29.300 17h26.600c.7 0 1 .4 1 1v27c0 7.500-5 12.500-12.500 12.500H17.800c-.7 0-1-.4-1-1V29.500C16.800 22 21.800 17 29.300 17z" fill="url(#g25)"/><path d="M25.500 28h22.700M25.500 36.500h22.700M25.500 44.800h22.700" stroke="#fff" stroke-width="2.500" stroke-linecap="round" opacity=".92"/></svg><div class="lb" style="top:81.5px">拖拽专题</div></div>
</div>
<div id="foot"><div id="save">保存</div></div>
<div id="whitebot"></div>
</body>
</html>
